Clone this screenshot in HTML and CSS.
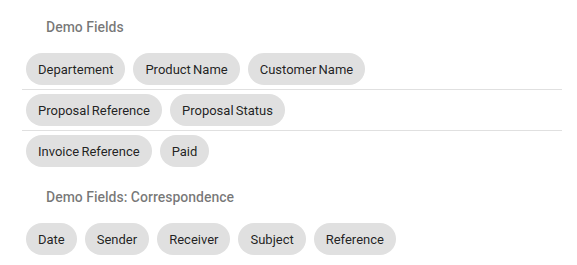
FILE: index.html
```html
<!DOCTYPE html>
<html lang="en">
<head>
    <meta charset="UTF-8">
    <meta name="viewport" content="width=device-width, initial-scale=1.0">
    <title>Demo Fields</title>
    <link rel="stylesheet" href="styles.css">
</head>
<body>
    <div class="field-list">
        <div class="subheader">Demo Fields</div>
        <div class="chip-row">
            <span class="chip">Departement</span>
            <span class="chip">Product Name</span>
            <span class="chip">Customer Name</span>
        </div>
        <div class="chip-row">
            <span class="chip">Proposal Reference</span>
            <span class="chip">Proposal Status</span>
        </div>
        <div class="chip-row last">
            <span class="chip">Invoice Reference</span>
            <span class="chip">Paid</span>
        </div>

        <div class="subheader">Demo Fields: Correspondence</div>
        <div class="chip-row last">
            <span class="chip">Date</span>
            <span class="chip">Sender</span>
            <span class="chip">Receiver</span>
            <span class="chip">Subject</span>
            <span class="chip">Reference</span>
        </div>
    </div>
</body>
</html>
```

FILE: styles.css
```css
body {
    margin: 0;
    background: #fff;
    font-family: Roboto, "Liberation Sans", Arial, sans-serif;
}
.field-list {
    width: 540px;
    margin-left: 22px;
    padding-top: 1px;
}
.subheader {
    height: 48px;
    box-sizing: border-box;
    padding: 4px 24px 0;
    line-height: 44px;
    font-size: 14px;
    font-weight: 500;
    color: rgba(0, 0, 0, 0.54);
}
.chip-row {
    display: flex;
    flex-wrap: wrap;
    border-bottom: 1px solid #e0e0e0;
}
.chip-row.last {
    border-bottom: none;
}
.chip {
    display: inline-flex;
    align-items: center;
    height: 32px;
    margin: 4px;
    padding: 0 12px;
    border-radius: 16px;
    background: #e0e0e0;
    color: rgba(0, 0, 0, 0.87);
    font-size: 13px;
    word-spacing: -1px;
}
```
